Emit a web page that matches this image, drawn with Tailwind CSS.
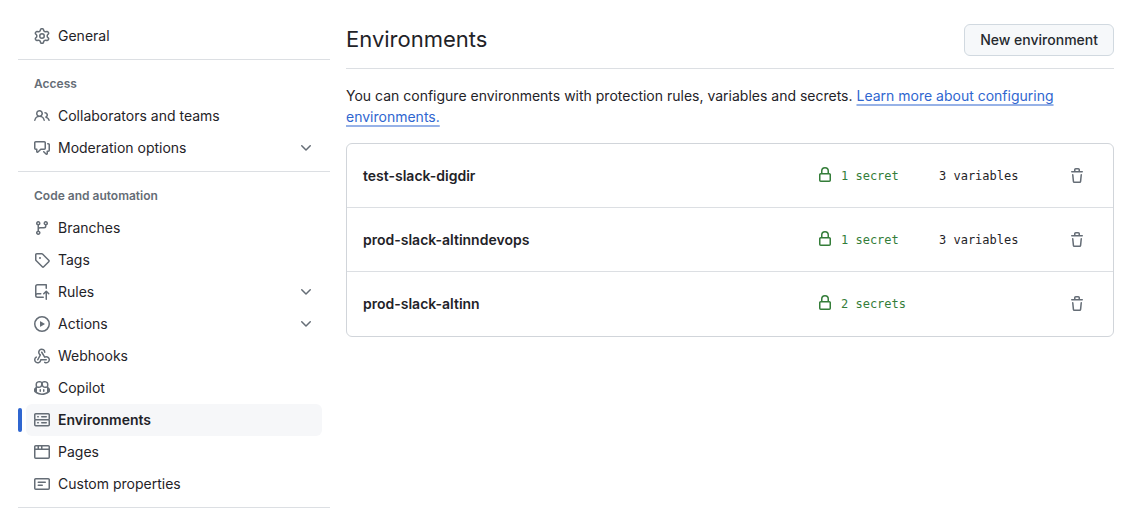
<!DOCTYPE html>
<html lang="en">
<head>
<meta charset="utf-8">
<meta name="viewport" content="width=device-width, initial-scale=1">
<title>Environments</title>
<script src="https://cdn.jsdelivr.net/npm/@tailwindcss/browser@4"></script>
</head>
<body class="bg-white font-[Inter,sans-serif] text-sm text-[#1f2328]">
<svg class="hidden" aria-hidden="true">
  <symbol id="chevron" viewBox="0 0 16 16"><path d="M12.78 5.22a.749.749 0 0 1 0 1.06l-4.25 4.25a.749.749 0 0 1-1.06 0L3.22 6.28a.749.749 0 1 1 1.06-1.06L8 8.939l3.72-3.719a.749.749 0 0 1 1.06 0Z"/></symbol>
  <symbol id="lock" viewBox="0 0 16 16"><path d="M4 4a4 4 0 0 1 8 0v2h.25c.966 0 1.75.784 1.75 1.75v5.5A1.75 1.75 0 0 1 12.25 15h-8.5A1.75 1.75 0 0 1 2 13.25v-5.5C2 6.784 2.784 6 3.75 6H4Zm8.25 3.5h-8.5a.25.25 0 0 0-.25.25v5.5c0 .138.112.25.25.25h8.5a.25.25 0 0 0 .25-.25v-5.5a.25.25 0 0 0-.25-.25ZM10.500 6V4a2.500 2.500 0 1 0-5 0v2Z"/></symbol>
  <symbol id="trash" viewBox="0 0 16 16"><path d="M11 1.750V3h2.250a.75.75 0 0 1 0 1.500H2.750a.75.75 0 0 1 0-1.500H5V1.750C5 .784 5.784 0 6.750 0h2.500C10.216 0 11 .784 11 1.750ZM4.496 6.675l.66 6.600a.25.25 0 0 0 .249.225h5.190a.25.25 0 0 0 .249-.225l.66-6.600a.75.75 0 0 1 1.492.149l-.66 6.600A1.748 1.748 0 0 1 10.595 15h-5.190a1.750 1.750 0 0 1-1.741-1.575l-.66-6.600a.75.75 0 1 1 1.492-.150ZM6.500 1.750V3h3V1.750a.25.25 0 0 0-.25-.25h-2.500a.25.25 0 0 0-.25.25Z"/></symbol>
</svg>
<div class="flex gap-4 pl-[18px] pr-8">
  <nav aria-label="Settings" class="w-[312px] shrink-0 pt-5">
    <ul class="px-2">
      <li><a href="#" class="flex h-8 items-center gap-2 rounded-md px-2">
        <svg class="size-4 fill-[#656d76]" viewBox="0 0 16 16"><path d="M8 0a8.2 8.2 0 0 1 .701.031C9.444.095 9.99.645 10.16 1.29l.288 1.107c.018.066.079.158.212.224.231.114.454.243.668.386.123.082.233.09.299.071l1.103-.303c.644-.176 1.392.021 1.82.63.27.385.506.792.704 1.218.315.675.111 1.422-.364 1.891l-.814.806c-.049.048-.098.147-.088.294.016.257.016.515 0 .772-.01.147.038.246.088.294l.814.806c.475.469.679 1.216.364 1.891a7.977 7.977 0 0 1-.704 1.217c-.428.61-1.176.807-1.82.63l-1.102-.302c-.067-.019-.177-.011-.3.071a5.909 5.909 0 0 1-.668.386c-.133.066-.194.158-.211.224l-.29 1.106c-.168.646-.715 1.196-1.458 1.26a8.006 8.006 0 0 1-1.402 0c-.743-.064-1.289-.614-1.458-1.26l-.289-1.106c-.018-.066-.079-.158-.212-.224a5.738 5.738 0 0 1-.668-.386c-.123-.082-.233-.09-.299-.071l-1.103.303c-.644.176-1.392-.021-1.82-.63a8.12 8.12 0 0 1-.704-1.218c-.315-.675-.111-1.422.363-1.891l.815-.806c.05-.048.098-.147.088-.294a6.214 6.214 0 0 1 0-.772c.01-.147-.038-.246-.088-.294l-.815-.806C.635 6.045.431 5.298.746 4.623a7.92 7.92 0 0 1 .704-1.217c.428-.61 1.176-.807 1.82-.63l1.102.302c.067.019.177.011.3-.071.214-.143.437-.272.668-.386.133-.066.194-.158.211-.224l.29-1.106C6.009.645 6.556.095 7.299.03 7.53.01 7.764 0 8 0Zm-.571 1.525c-.036.003-.108.036-.137.146l-.289 1.105c-.147.561-.549.967-.998 1.189-.173.086-.34.183-.5.29-.417.278-.97.423-1.529.27l-1.103-.303c-.109-.03-.175.016-.195.045-.22.312-.412.644-.573.99-.014.031-.021.11.059.19l.815.806c.411.406.562.957.53 1.456a4.709 4.709 0 0 0 0 .582c.032.499-.119 1.05-.53 1.456l-.815.806c-.081.08-.073.159-.059.19.162.346.353.677.573.989.02.03.085.076.195.046l1.102-.303c.56-.153 1.113-.008 1.53.27.161.107.328.204.501.29.447.222.85.629.997 1.189l.289 1.105c.029.109.101.143.137.146a6.6 6.6 0 0 0 1.142 0c.036-.003.108-.036.137-.146l.289-1.105c.147-.561.549-.967.998-1.189.173-.086.34-.183.5-.29.417-.278.97-.423 1.529-.27l1.103.303c.109.029.175-.016.195-.045.22-.313.411-.644.573-.99.014-.031.021-.11-.059-.19l-.815-.806c-.411-.406-.562-.957-.53-1.456a4.709 4.709 0 0 0 0-.582c-.032-.499.119-1.05.53-1.456l.815-.806c.081-.08.073-.159.059-.19a6.464 6.464 0 0 0-.573-.989c-.02-.03-.085-.076-.195-.046l-1.102.303c-.56.153-1.113.008-1.53-.27a4.44 4.44 0 0 0-.501-.29c-.447-.222-.85-.629-.997-1.189l-.289-1.105c-.029-.11-.101-.143-.137-.146a6.6 6.6 0 0 0-1.142 0ZM11 8a3 3 0 1 1-6 0 3 3 0 0 1 6 0ZM9.5 8a1.5 1.5 0 1 0-3.001.001A1.5 1.5 0 0 0 9.5 8Z"/></svg>
        General</a></li>
    </ul>
    <h2 class="mt-[7px] flex h-[41px] items-center border-t border-[#dcdfe3] px-4 pt-2 text-xs font-semibold text-[#656d76]">Access</h2>
    <ul class="px-2">
      <li><a href="#" class="flex h-8 items-center gap-2 rounded-md px-2">
        <svg class="size-4 fill-[#656d76]" viewBox="0 0 16 16"><path d="M2 5.5a3.5 3.5 0 1 1 5.898 2.549 5.508 5.508 0 0 1 3.034 4.084.75.75 0 1 1-1.482.235 4 4 0 0 0-7.9 0 .75.75 0 0 1-1.482-.236A5.507 5.507 0 0 1 3.102 8.05 3.493 3.493 0 0 1 2 5.5ZM11 4a3.001 3.001 0 0 1 2.22 5.018 5.01 5.01 0 0 1 2.56 3.012.749.749 0 0 1-.885.954.752.752 0 0 1-.549-.514 3.507 3.507 0 0 0-2.522-2.372.75.75 0 0 1-.574-.73v-.352a.75.75 0 0 1 .416-.672A1.5 1.5 0 0 0 11 5.5.75.75 0 0 1 11 4Zm-5.500-.5a2 2 0 1 0-.001 3.999A2 2 0 0 0 5.500 3.500Z"/></svg>
        Collaborators and teams</a></li>
      <li><button type="button" aria-expanded="false" class="flex h-8 w-full items-center gap-2 rounded-md px-2 text-left">
        <svg class="size-4 fill-[#656d76]" viewBox="0 0 16 16"><path d="M1.750 1h8.500c.966 0 1.750.784 1.750 1.750v5.500A1.750 1.750 0 0 1 10.250 10H7.061l-2.574 2.573A1.458 1.458 0 0 1 2 11.543V10h-.25A1.750 1.750 0 0 1 0 8.250v-5.500C0 1.784.784 1 1.750 1ZM1.500 2.750v5.500c0 .138.112.25.25.25h1a.75.75 0 0 1 .75.75v2.190l2.720-2.720a.749.749 0 0 1 .530-.220h3.500a.25.25 0 0 0 .25-.25v-5.500a.25.25 0 0 0-.25-.25h-8.500a.25.25 0 0 0-.25.25Zm13 2a.25.25 0 0 0-.25-.25h-.500a.75.75 0 0 1 0-1.500h.500c.966 0 1.750.784 1.750 1.750v5.500A1.750 1.750 0 0 1 14.250 12H14v1.543a1.458 1.458 0 0 1-2.487 1.030L9.220 12.280a.749.749 0 0 1 .326-1.275.749.749 0 0 1 .734.215l2.220 2.220v-2.190a.75.75 0 0 1 .75-.75h1a.25.25 0 0 0 .25-.25Z"/></svg>
        <span class="flex-1">Moderation options</span>
        <svg class="size-4 fill-[#656d76]"><use href="#chevron"/></svg></button></li>
    </ul>
    <h2 class="mt-[7px] flex h-[41px] items-center border-t border-[#dcdfe3] px-4 pt-2 text-xs font-semibold text-[#656d76]">Code and automation</h2>
    <ul class="px-2">
      <li><a href="#" class="flex h-8 items-center gap-2 rounded-md px-2">
        <svg class="size-4 fill-[#656d76]" viewBox="0 0 16 16"><path d="M9.500 3.250a2.250 2.250 0 1 1 3 2.122V6A2.500 2.500 0 0 1 10 8.500H6a1 1 0 0 0-1 1v1.128a2.251 2.251 0 1 1-1.500 0V5.372a2.250 2.250 0 1 1 1.500 0v1.836A2.493 2.493 0 0 1 6 7h4a1 1 0 0 0 1-1v-.628A2.250 2.250 0 0 1 9.500 3.250Zm-6 0a.75.75 0 1 0 1.500 0 .75.75 0 0 0-1.500 0Zm8.250-.75a.75.75 0 1 0 0 1.500.75.75 0 0 0 0-1.500ZM4.250 12a.75.75 0 1 0 0 1.500.75.75 0 0 0 0-1.500Z"/></svg>
        Branches</a></li>
      <li><a href="#" class="flex h-8 items-center gap-2 rounded-md px-2">
        <svg class="size-4 fill-[#656d76]" viewBox="0 0 16 16"><path d="M1 7.775V2.750C1 1.784 1.784 1 2.750 1h5.025c.464 0 .910.184 1.238.513l6.250 6.250a1.750 1.750 0 0 1 0 2.474l-5.026 5.026a1.750 1.750 0 0 1-2.474 0l-6.250-6.250A1.752 1.752 0 0 1 1 7.775Zm1.500 0c0 .066.026.130.073.177l6.250 6.250a.25.25 0 0 0 .354 0l5.025-5.025a.25.25 0 0 0 0-.354l-6.250-6.250a.25.25 0 0 0-.177-.073H2.750a.25.25 0 0 0-.25.25ZM6 5a1 1 0 1 1 0 2 1 1 0 0 1 0-2Z"/></svg>
        Tags</a></li>
      <li><button type="button" aria-expanded="false" class="flex h-8 w-full items-center gap-2 rounded-md px-2 text-left">
        <svg class="size-4 fill-[#656d76]" viewBox="0 0 16 16"><path d="M1 2.500A2.500 2.500 0 0 1 3.500 0h8.750a.75.75 0 0 1 .75.75v3.500a.75.75 0 0 1-1.500 0V1.500h-8a1 1 0 0 0-1 1v6.708A2.493 2.493 0 0 1 3.500 9h3.250a.75.75 0 0 1 0 1.500H3.500a1 1 0 0 0 0 2h5.750a.75.75 0 0 1 0 1.500H3.500A2.500 2.500 0 0 1 1 11.500Zm13.230 7.790h-.001l-1.224-1.224v6.184a.75.75 0 0 1-1.500 0V9.066L10.280 10.290a.75.75 0 0 1-1.060-1.061l2.505-2.504a.75.75 0 0 1 1.060 0L15.290 9.230a.751.751 0 0 1-.018 1.042.751.751 0 0 1-1.042.018Z"/></svg>
        <span class="flex-1">Rules</span>
        <svg class="size-4 fill-[#656d76]"><use href="#chevron"/></svg></button></li>
      <li><button type="button" aria-expanded="false" class="flex h-8 w-full items-center gap-2 rounded-md px-2 text-left">
        <svg class="size-4 fill-[#656d76]" viewBox="0 0 16 16"><path d="M8 0a8 8 0 1 1 0 16A8 8 0 0 1 8 0ZM1.500 8a6.500 6.500 0 1 0 13 0 6.500 6.500 0 0 0-13 0Zm4.879-2.773 4.264 2.559a.25.25 0 0 1 0 .428l-4.264 2.559A.25.25 0 0 1 6 10.559V5.442a.25.25 0 0 1 .379-.215Z"/></svg>
        <span class="flex-1">Actions</span>
        <svg class="size-4 fill-[#656d76]"><use href="#chevron"/></svg></button></li>
      <li><a href="#" class="flex h-8 items-center gap-2 rounded-md px-2">
        <svg class="size-4 fill-[#656d76]" viewBox="0 0 16 16"><path d="M5.500 4.250a2.250 2.250 0 0 1 4.500 0 .75.75 0 0 0 1.500 0 3.750 3.750 0 1 0-6.140 2.889l-2.272 4.258a.75.75 0 0 0 1.324.706L7 7.250a.75.75 0 0 0-.309-1.015A2.250 2.250 0 0 1 5.500 4.250Z"/><path d="M7.364 3.607a.75.75 0 0 1 1.030.257l2.608 4.349a3.750 3.750 0 1 1-.628 6.785.75.75 0 0 1 .752-1.299 2.250 2.250 0 1 0-.033-3.880.75.75 0 0 1-1.030-.256L7.107 4.636a.75.75 0 0 1 .257-1.030Z"/><path d="M2.900 8.776A.75.75 0 0 1 2.625 9.800 2.250 2.250 0 1 0 6 11.750a.75.75 0 0 1 .75-.751h5.500a.75.75 0 0 1 0 1.500H7.425a3.751 3.751 0 1 1-5.550-3.998.75.75 0 0 1 1.024.274Z"/></svg>
        Webhooks</a></li>
      <li><a href="#" class="flex h-8 items-center gap-2 rounded-md px-2">
        <svg class="size-4 fill-[#656d76]" viewBox="0 0 16 16"><path d="M7.998 15.035c-4.562 0-7.873-2.914-7.998-3.749V9.338c.085-.628.677-1.686 1.588-2.065.013-.07.024-.143.036-.218.029-.183.06-.384.126-.612-.201-.508-.254-1.084-.254-1.656 0-.87.128-1.769.693-2.484.579-.733 1.494-1.124 2.724-1.261 1.206-.134 2.262.034 2.944.765.05.053.096.108.139.165.044-.057.094-.112.143-.165.682-.731 1.738-.899 2.944-.765 1.23.137 2.145.528 2.724 1.261.566.715.693 1.614.693 2.484 0 .572-.053 1.148-.254 1.656.066.228.098.429.126.612.012.076.024.148.037.218.924.385 1.522 1.471 1.591 2.095v1.872c0 .766-3.351 3.795-8.002 3.795Zm0-1.485c2.28 0 4.584-1.11 5.002-1.433V7.862l-.023-.116c-.49.21-1.075.291-1.727.291-1.146 0-2.059-.327-2.71-.991A3.222 3.222 0 0 1 8 6.303a3.24 3.24 0 0 1-.544.743c-.65.664-1.563.991-2.71.991-.652 0-1.236-.081-1.727-.291l-.023.116v4.255c.419.323 2.722 1.433 5.002 1.433ZM6.762 2.83c-.193-.206-.637-.413-1.682-.297-1.019.113-1.479.404-1.713.7-.247.312-.369.789-.369 1.554 0 .793.129 1.171.308 1.371.162.181.519.379 1.442.379.853 0 1.339-.235 1.638-.54.315-.322.527-.827.617-1.553.117-.935-.037-1.395-.241-1.614Zm4.155-.297c-1.044-.116-1.488.091-1.681.297-.204.219-.359.679-.242 1.614.091.726.303 1.231.618 1.553.299.305.784.54 1.638.54.922 0 1.28-.198 1.442-.379.179-.2.308-.578.308-1.371 0-.765-.123-1.242-.37-1.554-.233-.296-.693-.587-1.713-.7Z"/><path d="M6.25 9.037a.75.75 0 0 1 .75.75v1.501a.75.75 0 0 1-1.5 0V9.787a.75.75 0 0 1 .75-.75Zm4.25.75v1.501a.75.75 0 0 1-1.5 0V9.787a.75.75 0 0 1 1.5 0Z"/></svg>
        Copilot</a></li>
      <li class="relative"><span class="absolute top-1 -left-2 h-6 w-1 rounded-md bg-[#2f66d0]"></span><a href="#" aria-current="page" class="flex h-8 items-center gap-2 rounded-md bg-[#f6f7f9] px-2 font-semibold">
        <svg class="size-4 fill-[#656d76]" viewBox="0 0 16 16"><path d="M1.750 1h12.500c.966 0 1.750.784 1.750 1.750v4c0 .372-.116.717-.314 1 .198.283.314.628.314 1v4a1.750 1.750 0 0 1-1.750 1.750H1.750A1.750 1.750 0 0 1 0 12.750v-4c0-.358.109-.707.314-1a1.739 1.739 0 0 1-.314-1v-4C0 1.784.784 1 1.750 1ZM1.500 2.750v4c0 .138.112.25.25.25h12.500a.25.25 0 0 0 .25-.25v-4a.25.25 0 0 0-.25-.25H1.750a.25.25 0 0 0-.25.25Zm.250 5.750a.25.25 0 0 0-.25.25v4c0 .138.112.25.25.25h12.500a.25.25 0 0 0 .25-.25v-4a.25.25 0 0 0-.25-.25ZM7 4.750A.75.75 0 0 1 7.750 4h4.500a.75.75 0 0 1 0 1.500h-4.500A.75.75 0 0 1 7 4.750ZM7.750 10h4.500a.75.75 0 0 1 0 1.500h-4.500a.75.75 0 0 1 0-1.500ZM3 4.750A.75.75 0 0 1 3.750 4h.500a.75.75 0 0 1 0 1.500h-.500A.75.75 0 0 1 3 4.750ZM3.750 10h.500a.75.75 0 0 1 0 1.500h-.500a.75.75 0 0 1 0-1.500Z"/></svg>
        Environments</a></li>
      <li><a href="#" class="flex h-8 items-center gap-2 rounded-md px-2">
        <svg class="size-4 fill-[#656d76]" viewBox="0 0 16 16"><path d="M0 2.750C0 1.784.784 1 1.750 1h12.500c.966 0 1.750.784 1.750 1.750v10.500A1.750 1.750 0 0 1 14.250 15H1.750A1.750 1.750 0 0 1 0 13.250ZM14.500 6h-13v7.250c0 .138.112.25.25.25h12.500a.25.25 0 0 0 .25-.25Zm-6-3.500v2h6V2.750a.25.25 0 0 0-.25-.25ZM5 2.500v2h2v-2Zm-3.250 0a.25.25 0 0 0-.25.25V4.500h2v-2Z"/></svg>
        Pages</a></li>
      <li><a href="#" class="flex h-8 items-center gap-2 rounded-md px-2">
        <svg class="size-4 fill-[#656d76]" viewBox="0 0 16 16"><path d="M0 3.750C0 2.784.784 2 1.750 2h12.500c.966 0 1.750.784 1.750 1.750v8.500A1.750 1.750 0 0 1 14.250 14H1.750A1.750 1.750 0 0 1 0 12.250Zm1.750-.25a.25.25 0 0 0-.25.25v8.500c0 .138.112.25.25.25h12.500a.25.25 0 0 0 .25-.25v-8.500a.25.25 0 0 0-.25-.25ZM3.500 6.250a.75.75 0 0 1 .75-.75h7a.75.75 0 0 1 0 1.500h-7a.75.75 0 0 1-.75-.75Zm.750 2.250h4a.75.75 0 0 1 0 1.500h-4a.75.75 0 0 1 0-1.500Z"/></svg>
        Custom properties</a></li>
    </ul>
    <hr class="mt-[7px] border-[#dcdfe3]">
  </nav>
  <main class="min-w-0 flex-1 pt-6">
    <header class="flex items-start justify-between border-b border-[#dcdfe3] pb-3">
      <h1 class="text-[22px] leading-[30px]">Environments</h1>
      <button type="button" class="h-8 rounded-md border border-[#d1d9e0] bg-[#f6f8fa] px-[15px] font-medium text-[#25292e]">New environment</button>
    </header>
    <p class="mt-4 leading-[21px]">You can configure environments with protection rules, variables and secrets. <a href="#" class="text-[#2f66d0] underline decoration-[#2f66d0]/50 decoration-2 underline-offset-3 [text-decoration-skip-ink:none]">Learn more about configuring environments.</a></p>
    <ul class="mt-4 divide-y divide-[#dcdfe3] rounded-md border border-[#d1d5da]">
      <li class="flex h-16 items-center pr-5 pl-4">
        <a href="#" class="flex-1 font-semibold">test-slack-digdir</a>
        <span class="flex w-[122px] items-center gap-2 font-['DejaVu_Sans_Mono',monospace] text-xs text-[#347d39]"><svg class="mb-[2px] size-4 fill-current"><use href="#lock"/></svg>1 secret</span>
        <span class="w-[122px] font-['DejaVu_Sans_Mono',monospace] text-xs">3 variables</span>
        <button type="button" aria-label="Delete test-slack-digdir" class="flex size-8 items-center justify-center"><svg class="size-4 fill-[#656d76]"><use href="#trash"/></svg></button>
      </li>
      <li class="flex h-16 items-center pr-5 pl-4">
        <a href="#" class="flex-1 font-semibold">prod-slack-altinndevops</a>
        <span class="flex w-[122px] items-center gap-2 font-['DejaVu_Sans_Mono',monospace] text-xs text-[#347d39]"><svg class="mb-[2px] size-4 fill-current"><use href="#lock"/></svg>1 secret</span>
        <span class="w-[122px] font-['DejaVu_Sans_Mono',monospace] text-xs">3 variables</span>
        <button type="button" aria-label="Delete prod-slack-altinndevops" class="flex size-8 items-center justify-center"><svg class="size-4 fill-[#656d76]"><use href="#trash"/></svg></button>
      </li>
      <li class="flex h-16 items-center pr-5 pl-4">
        <a href="#" class="flex-1 font-semibold">prod-slack-altinn</a>
        <span class="flex w-[122px] items-center gap-2 font-['DejaVu_Sans_Mono',monospace] text-xs text-[#347d39]"><svg class="mb-[2px] size-4 fill-current"><use href="#lock"/></svg>2 secrets</span>
        <span class="w-[122px]"></span>
        <button type="button" aria-label="Delete prod-slack-altinn" class="flex size-8 items-center justify-center"><svg class="size-4 fill-[#656d76]"><use href="#trash"/></svg></button>
      </li>
    </ul>
  </main>
</div>
</body>
</html>
